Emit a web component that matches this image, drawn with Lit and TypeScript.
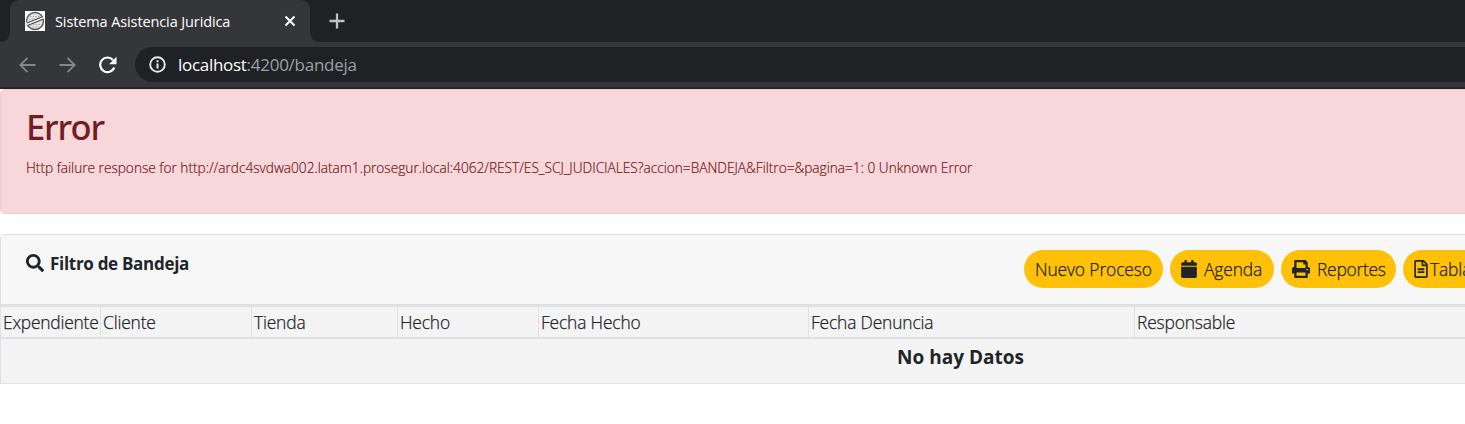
import { LitElement, html, css, svg } from "lit";
import { customElement } from "lit/decorators.js";

const columns = ["Expendiente", "Cliente", "Tienda", "Hecho", "Fecha Hecho", "Fecha Denuncia", "Responsable"];

const faSearch = svg`<path d="M505 442.700L405.300 343c-4.500-4.500-10.600-7-17-7H372c27.600-35.300 44-79.700 44-128C416 93.100 322.900 0 208 0S0 93.100 0 208s93.100 208 208 208c48.300 0 92.700-16.400 128-44v16.300c0 6.400 2.500 12.500 7 17l99.700 99.700c9.400 9.400 24.600 9.400 33.900 0l28.300-28.300c9.400-9.400 9.400-24.600.1-34zM208 336c-70.700 0-128-57.200-128-128 0-70.700 57.200-128 128-128 70.700 0 128 57.200 128 128 0 70.700-57.200 128-128 128z"/>`;
const faCalendar = svg`<path d="M12 192h424c6.600 0 12 5.400 12 12v260c0 26.500-21.500 48-48 48H48c-26.500 0-48-21.500-48-48V204c0-6.600 5.400-12 12-12zm436-44v-36c0-26.500-21.500-48-48-48h-48V12c0-6.600-5.400-12-12-12h-40c-6.600 0-12 5.400-12 12v52H160V12c0-6.600-5.400-12-12-12h-40c-6.600 0-12 5.400-12 12v52H48C21.500 64 0 85.500 0 112v36c0 6.600 5.400 12 12 12h424c6.600 0 12-5.400 12-12z"/>`;
const faPrint = svg`<path d="M448 192V77.250c0-8.490-3.370-16.620-9.370-22.630L393.370 9.370c-6-6-14.140-9.370-22.630-9.370H96C78.330 0 64 14.330 64 32v160c-35.350 0-64 28.650-64 64v112c0 8.840 7.160 16 16 16h48v96c0 17.670 14.330 32 32 32h320c17.670 0 32-14.330 32-32v-96h48c8.840 0 16-7.160 16-16V256c0-35.350-28.650-64-64-64zm-64 256H128v-96h256v96zm0-224H128V64h192v48c0 8.840 7.160 16 16 16h48v96zm48 72c-13.250 0-24-10.750-24-24 0-13.260 10.750-24 24-24s24 10.740 24 24c0 13.250-10.750 24-24 24z"/>`;
const faFile = svg`<path d="M288 248v28c0 6.600-5.400 12-12 12H108c-6.600 0-12-5.400-12-12v-28c0-6.600 5.400-12 12-12h168c6.600 0 12 5.400 12 12zm-12 72H108c-6.600 0-12 5.400-12 12v28c0 6.600 5.400 12 12 12h168c6.600 0 12-5.400 12-12v-28c0-6.600-5.400-12-12-12zm108-188.100V464c0 26.500-21.500 48-48 48H48c-26.500 0-48-21.500-48-48V48C0 21.500 21.500 0 48 0h204.100C264.800 0 277 5.100 286 14.100L369.900 98c9 8.900 14.100 21.200 14.100 33.900zm-128-80V128h76.100L256 51.900zM336 464V176H232c-13.300 0-24-10.700-24-24V48H48v416h288z"/>`;

@customElement("app-root")
export class AppRoot extends LitElement {
  static styles = css`
    :host { display: block; width: 100%; height: 424px; overflow: hidden; background: #fff; color: #212529;
      font-family: "Open Sans", "Noto Sans", sans-serif; font-size: 17.4px; font-weight: 300; letter-spacing: -0.16px; white-space: nowrap; }
    * { box-sizing: border-box; }
    svg { display: block; flex: none; }
    .tabs { display: flex; height: 42px; background: #202124; }
    .gutter { width: 10px; background: #35363a; }
    .gutter i { display: block; height: 42px; background: #202124; border-bottom-right-radius: 9px; }
    .gutter i.after { border-radius: 0 0 0 9px; }
    .shell { background: #202124; }
    .tab { display: flex; align-items: center; width: 300px; height: 42px; padding: 0 14px 0 15px; background: #35363a; border-radius: 9px 9px 0 0; color: #fff; font-size: 14.5px; font-weight: 400; letter-spacing: -0.11px; }
    .tab .title { margin: 0 auto 0 10px; }
    .plus { margin: 13px 0 0 9px; }
    .bar { display: flex; align-items: center; height: 45px; background: #35363a; padding-left: 19px; }
    .bar .fwd { margin-left: 23px; }
    .bar .rel { margin-left: 22px; }
    .omni { display: flex; align-items: center; flex: 1; height: 35px; margin-left: 17px; padding-left: 14px; background: #202124; border-radius: 18px 0 0 18px; color: #9aa0a6; font-size: 17px; font-weight: 400; letter-spacing: -0.25px; }
    .omni .url { margin-left: 12px; }
    .omni b { color: #fff; font-weight: 400; letter-spacing: -0.3px; }
    .edge { height: 2px; background: #242528; }
    .content { width: 1920px; }
    .alert { height: 125px; padding: 13px 25px; background: #f8d7da; border: 1px solid #f5c6cb; border-radius: 5px; color: #721c24; }
    .alert h1 { margin: 0; font-family: "Noto Sans", "Open Sans", sans-serif; font-size: 34.5px; line-height: 48px; font-weight: 500; letter-spacing: -1.1px; }
    .alert p { margin: 5px 0 0; font-size: 13.66px; line-height: 24px; letter-spacing: 0; -webkit-text-stroke: 0.2px; }
    .head { display: flex; height: 71px; margin-top: 20px; padding: 15px 0 0 25px; background: #f7f7f7; border: 1px solid #dfdfdf; border-radius: 5px 5px 0 0; }
    .head h2 { display: flex; gap: 6px; align-items: center; width: 998px; height: 26px; margin: 0; font-size: 17px; font-weight: 700; letter-spacing: -0.3px; }
    .buttons { display: flex; gap: 7px; }
    .btn { display: flex; align-items: center; gap: 7px; height: 38px; padding: 0 0 0 11px; border-radius: 19px; background: #ffc107; fill: #212529; -webkit-text-stroke: 0.25px; letter-spacing: -0.12px; }
    .new { width: 139px; }
    .agenda { width: 104px; }
    .reports { width: 115px; letter-spacing: -0.25px; }
    .tables { width: 84px; gap: 2px; }
    .grid { display: grid; grid-template-columns: 99px 151px 146px 141px 270px 326px 1fr; border: 1px solid #dee2e6; border-right: 0; background: #f4f4f4; }
    .rule { height: 1px; background: #e2e2e2; }
    .grid .th { height: 30px; line-height: 31px; padding-left: 2px; border-left: 1px solid #dee2e6; -webkit-text-stroke: 0.25px; }
    .grid .th:first-child { border-left: 0; letter-spacing: -0.22px; }
    .none { grid-column: 1 / -1; height: 46px; border-top: 2px solid #dee2e6; text-align: center; font-size: 19px; line-height: 37px; font-weight: 700; letter-spacing: 0; }
  `;

  render() {
    return html`
      <div class="tabs">
        <div class="gutter"><i></i></div>
        <div class="shell"><div class="tab">
          <svg width="20" height="20" viewBox="0 0 20 20"><rect width="20" height="20" fill="#fff"/><circle cx="10" cy="10" r="8.500" fill="#e4e4e4" stroke="#555" stroke-width="1.400"/><path d="M5 5.500h10M4 8h8M8 13.500h8M5 16h9" stroke="#aaa" stroke-width="1" stroke-dasharray="1.500 1.200"/><path d="M1.500 13L18.500 6.500" stroke="#fff" stroke-width="3"/><path d="M2 12L18 5.500M2.500 14.500L18.500 8" stroke="#444" stroke-width="1.200"/></svg>
          <span class="title">Sistema Asistencia Juridica</span>
          <svg width="12" height="12" viewBox="0 0 12 12"><path d="M1.500 1.500l9 9M10.500 1.500l-9 9" stroke="#fff" stroke-width="2"/></svg>
        </div></div>
        <div class="gutter"><i class="after"></i></div>
        <svg class="plus" width="16" height="16" viewBox="0 0 16 16"><path d="M8 .5v15M.5 8h15" stroke="#bdc1c6" stroke-width="2.300"/></svg>
      </div>
      <div class="bar">
        <svg width="17" height="16" viewBox="0 0 17 16" fill="none" stroke="#85868a" stroke-width="1.800"><path d="M16.500 8H1.500M8.500 .8L1.300 8l7.200 7.200"/></svg>
        <svg class="fwd" width="17" height="16" viewBox="0 0 17 16" fill="none" stroke="#85868a" stroke-width="1.800"><path d="M.5 8h15M8.500 .8L15.700 8l-7.200 7.200"/></svg>
        <svg class="rel" width="20" height="18" viewBox="0 0 20 18"><path d="M15 4A7.300 7.300 0 1 0 16.300 11.500" fill="none" stroke="#fff" stroke-width="2.200"/><path d="M18.500 .8v7.400h-7.400z" fill="#fff"/></svg>
        <div class="omni">
          <svg width="17" height="17" viewBox="0 0 17 17"><circle cx="8.500" cy="8.500" r="7.300" fill="none" stroke="#e8eaed" stroke-width="1.900"/><path d="M8.500 7.500v5M8.500 4.300v1.900" stroke="#e8eaed" stroke-width="2"/></svg>
          <span class="url"><b>localhost</b>:4200/bandeja</span>
        </div>
      </div>
      <div class="edge"></div>
      <div class="content">
        <div class="alert"><h1>Error</h1><p>Http failure response for http://ardc4svdwa002.latam1.prosegur.local:4062/REST/ES_SCJ_JUDICIALES?accion=BANDEJA&amp;Filtro=&amp;pagina=1: 0 Unknown Error</p></div>
        <div class="head">
          <h2><svg width="18" height="18" viewBox="0 0 512 512" fill="#212529">${faSearch}</svg><span>Filtro de Bandeja</span></h2>
          <div class="buttons">
            <div class="btn new">Nuevo Proceso</div>
            <div class="btn agenda"><svg width="16" height="18" viewBox="0 0 448 512">${faCalendar}</svg><span>Agenda</span></div>
            <div class="btn reports"><svg width="18" height="18" viewBox="0 0 512 512">${faPrint}</svg><span>Reportes</span></div>
            <div class="btn tables"><svg width="14" height="18" viewBox="0 0 384 512">${faFile}</svg><span>Tabla</span></div>
          </div>
        </div>
        <div class="rule"></div>
        <div class="grid">${columns.map(c => html`<div class="th">${c}</div>`)}
          <div class="none">No hay Datos</div></div>
      </div>`;
  }
}
